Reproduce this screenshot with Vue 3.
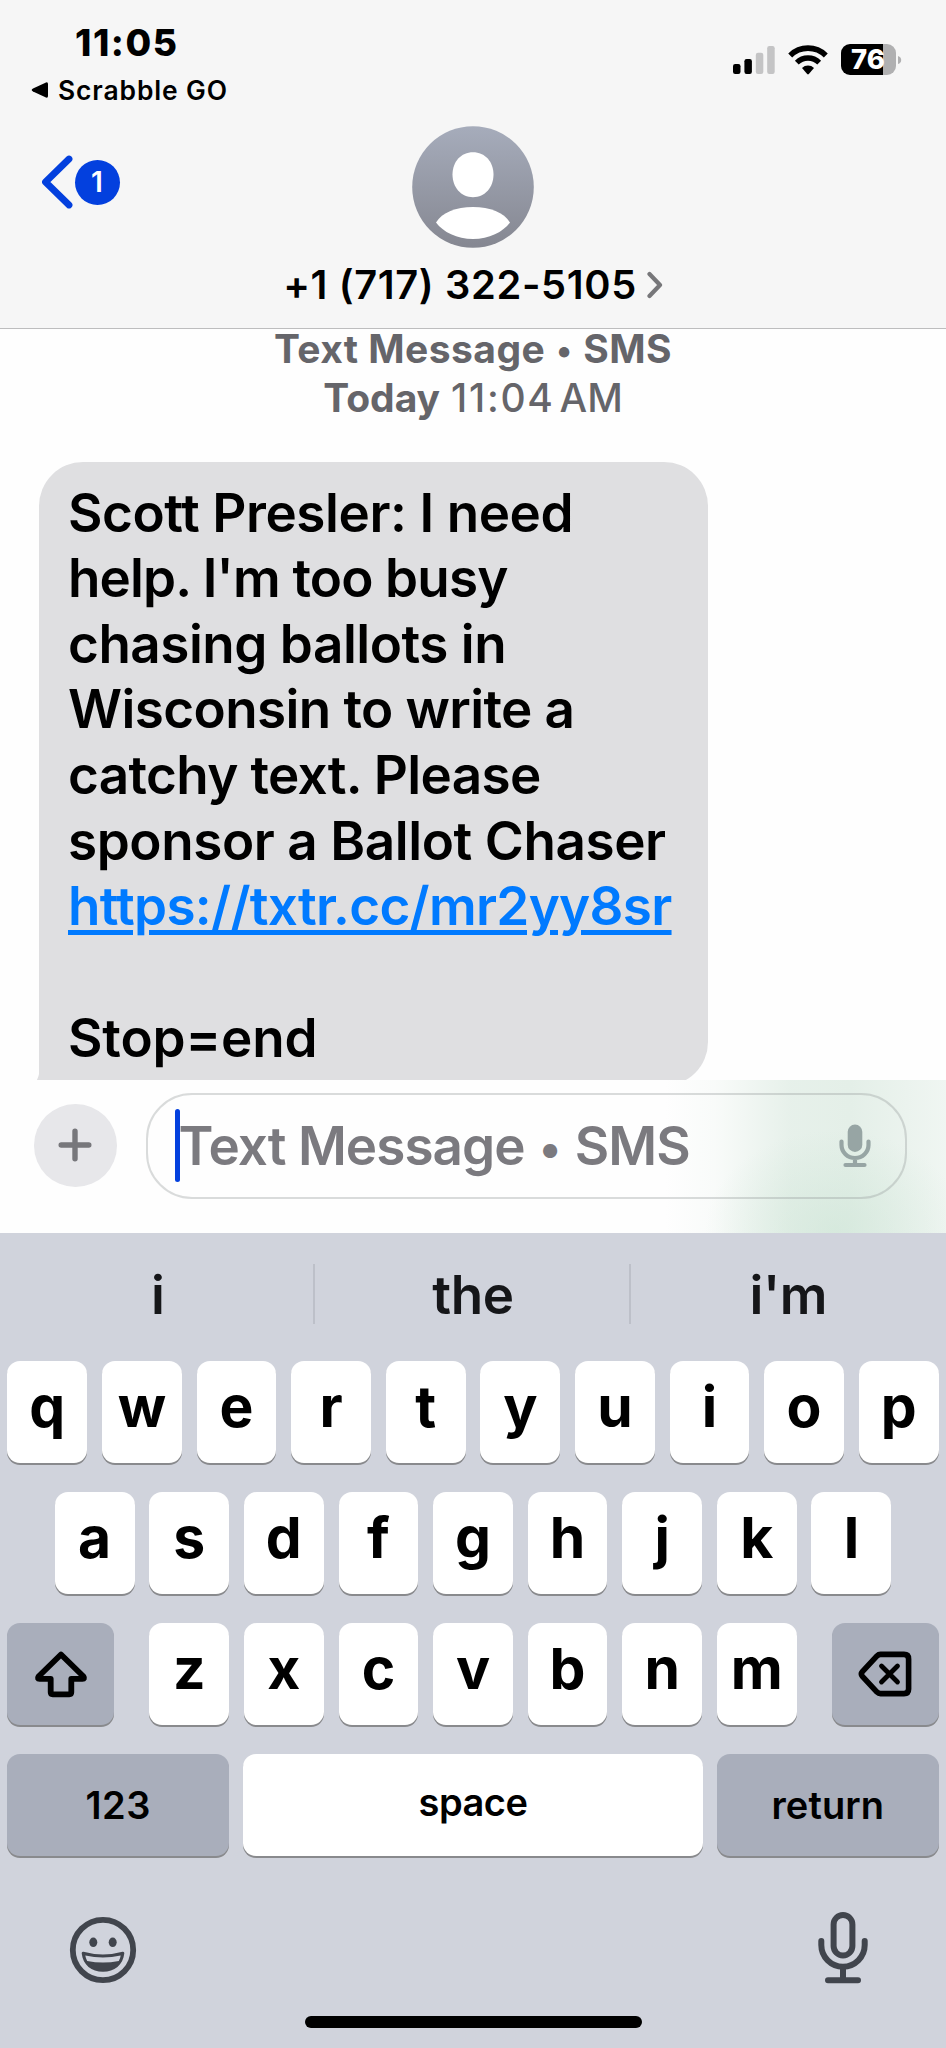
<script setup>
const messageLines = [
  { text: 'Scott Presler: I need', spacing: -0.42 },
  { text: "help. I'm too busy", spacing: -0.85 },
  { text: 'chasing ballots in', spacing: -0.48 },
  { text: 'Wisconsin to write a', spacing: -0.6 },
  { text: 'catchy text. Please', spacing: -0.66 },
  { text: 'sponsor a Ballot Chaser', spacing: -0.42 },
  { text: 'https://txtr.cc/mr2yy8sr', spacing: -0.71, link: true },
  { text: '', spacing: 0 },
  { text: 'Stop=end', spacing: -0.12 },
]
const suggestions = ['i', 'the', "i'm"]
const topRow = [...'qwertyuiop']
const homeRow = [...'asdfghjkl']
const bottomRow = [...'zxcvbnm']
</script>

<template>
  <div class="screen">
    <header class="header">
      <div class="status">
        <div class="clock-block">
          <div class="clock">11:05</div>
          <div class="back-app">
            <svg width="18" height="18" viewBox="0 0 18 18"><path d="M2 7.6 15 1.4Q17 .7 17 3v12q0 2.3-2 1.6L2 10.4Q-.6 9 2 7.6Z" /></svg>
            <span>Scrabble GO</span>
          </div>
        </div>
        <div class="indicators">
          <svg width="42" height="28" viewBox="0 0 42 28">
            <rect x="0" y="18" width="7.5" height="10" rx="2.2" />
            <rect x="11.4" y="13" width="7.5" height="15" rx="2.2" />
            <rect x="22.8" y="6.8" width="7.5" height="21.2" rx="2.2" fill="#c4c4c5" />
            <rect x="34.2" y="0" width="7.5" height="28" rx="2.2" fill="#c4c4c5" />
          </svg>
          <svg class="wifi" width="40" height="30" viewBox="0 0 40 30">
            <path d="M2.2 10.4a25.4 25.4 0 0 1 35.6 0" fill="none" stroke="#000" stroke-width="5.6" />
            <path d="M8.8 17.6a16 16 0 0 1 22.4 0" fill="none" stroke="#000" stroke-width="5.4" />
            <path d="M14 23a8.6 8.6 0 0 1 12 0L20.8 29q-.8.8-1.6 0Z" />
          </svg>
          <div class="battery"><span>76</span></div>
          <svg class="nub" width="4" height="8" viewBox="0 0 4 8"><path d="M0 0q3.2 1 3.2 4T0 8Z" fill="#b0b0b1" /></svg>
        </div>
      </div>
      <div class="contact">
        <div class="back">
          <svg width="33" height="54" viewBox="0 0 33 54"><path d="M29 4 5.500 27 29 50" fill="none" stroke="#0340de" stroke-width="6.800" stroke-linecap="round" stroke-linejoin="round" /></svg>
          <span class="unread">1</span>
        </div>
        <svg width="122" height="122" viewBox="0 0 122 122">
          <defs>
            <linearGradient id="avatarFill" x1="0" y1="0" x2="0" y2="1">
              <stop offset="0" stop-color="#a6acbb" />
              <stop offset="1" stop-color="#858791" />
            </linearGradient>
          </defs>
          <circle cx="61" cy="61" r="60.800" fill="url(#avatarFill)" />
          <path d="M61 26.200c12 0 20.500 9.500 20.500 22.300S73 71.200 61 71.200 40.500 61.300 40.500 48.500 49 26.200 61 26.200Z" fill="#fff" />
          <path d="M24 96.500C30 86.500 44 81 61 81s31 5.500 37 15.500C91 106 77 113 61 113S31 106 24 96.500Z" fill="#fff" />
        </svg>
      </div>
      <div class="number">
        <span>+1 (717) 322-5105</span>
        <svg width="16" height="28" viewBox="0 0 16 28"><path d="M2.500 3 13 14 2.500 25" fill="none" stroke="#77777a" stroke-width="4.200" stroke-linecap="round" stroke-linejoin="round" /></svg>
      </div>
    </header>

    <main class="thread">
      <div class="stamp">
        <div class="service">Text Message <span class="dot">•</span> SMS</div>
        <div class="when"><b>Today</b><span class="hour">11:04</span><span>AM</span></div>
      </div>
      <div class="bubble">
        <svg class="tail" width="8" height="12" viewBox="0 0 8 12"><path d="M8 0H3.500Q3.500 5 0 12h8Z" fill="#dfdfe1" /></svg>
        <div
          v-for="(line, i) in messageLines"
          :key="i"
          class="line"
          :class="{ link: line.link }"
          :style="{ letterSpacing: line.spacing + 'px' }"
        ><span>{{ line.text }}</span></div>
      </div>
    </main>

    <section class="composer">
      <div class="plus">
        <svg width="34" height="34" viewBox="0 0 34 34"><path d="M17 3.200v27.600M3.200 17h27.600" stroke="#77777b" stroke-width="5.400" stroke-linecap="round" /></svg>
      </div>
      <div class="field">
        <i class="caret"></i>
        <span class="placeholder">Text Message <span class="dot">•</span> SMS</span>
        <svg width="32" height="44" viewBox="0 0 32 44">
          <rect x="8.700" y="0.500" width="14.600" height="27.500" rx="7.300" fill="#97a5a4" />
          <path d="M2.500 17.500v3.500a13.500 13 0 0 0 27 0v-3.500M16 34v6M6.500 41h19" fill="none" stroke="#97a5a4" stroke-width="4.200" stroke-linecap="round" />
        </svg>
      </div>
    </section>

    <section class="keyboard">
      <div class="suggestions">
        <div v-for="word in suggestions" :key="word" class="suggestion">{{ word }}</div>
      </div>
      <div class="row">
        <div v-for="k in topRow" :key="k" class="key">{{ k }}</div>
      </div>
      <div class="row">
        <div v-for="k in homeRow" :key="k" class="key">{{ k }}</div>
      </div>
      <div class="row spread">
        <div class="key side">
          <svg width="54" height="48" viewBox="0 0 54 48"><path d="M27 4.500 49.500 26.500q1.500 2.300-1 2.300H37.300v13.500q0 2-2 2H18.700q-2 0-2-2V28.800H5.500q-2.500 0-1-2.300Z" fill="none" stroke="#000" stroke-width="5.800" stroke-linejoin="round" /></svg>
        </div>
        <div class="letters">
          <div v-for="k in bottomRow" :key="k" class="key">{{ k }}</div>
        </div>
        <div class="key side">
          <svg width="54" height="46" viewBox="0 0 54 46">
            <path d="M22.500 3.400H46q4.600 0 4.600 4.600v30q0 4.600-4.600 4.600H22.500q-2 0-3.500-1.500L4.400 25.300Q2.400 23 4.400 20.700L19 4.900q1.500-1.500 3.500-1.500Z" fill="none" stroke="#000" stroke-width="5.600" stroke-linejoin="round" />
            <path d="m23.500 15 16 16m0-16-16 16" stroke="#000" stroke-width="4.800" stroke-linecap="round" />
          </svg>
        </div>
      </div>
      <div class="row spread">
        <div class="key wide digits">123</div>
        <div class="key space">space</div>
        <div class="key wide enter">return</div>
      </div>
      <div class="tools">
        <svg width="68" height="68" viewBox="0 0 68 68">
          <circle cx="34" cy="34" r="30.200" fill="none" stroke="#41454d" stroke-width="5.800" />
          <ellipse cx="24.300" cy="26.300" rx="4" ry="4.800" fill="#41454d" />
          <ellipse cx="43.700" cy="26.300" rx="4" ry="4.800" fill="#41454d" />
          <path d="M14.500 35.800q19.500 5.500 39 0 2-.4 1.800 1.800C54 49 45.500 55.800 34 55.800S14 49 12.700 37.600q-.2-2.200 1.800-1.800Z" fill="#41454d" />
          <path d="M16.300 39.600q17.700 3.800 35.400 0-.4 3-1.900 5.400-15.800 3-31.600 0-1.500-2.400-1.900-5.400Z" fill="#d0d3dc" />
        </svg>
        <svg width="50" height="72" viewBox="0 0 50 72">
          <g fill="none" stroke="#41454d" stroke-width="6" stroke-linecap="round">
            <rect x="15.600" y="3" width="18.800" height="40.500" rx="9.400" />
            <path d="M3.300 29v4a21.700 21.700 0 0 0 43.400 0v-4M25 56v12M10 68.300h30" />
          </g>
        </svg>
      </div>
      <div class="home-bar"></div>
    </section>
  </div>
</template>

<style>
body { margin: 0; background: #fff; }
</style>

<style scoped>
.screen { width: 946px; height: 2048px; display: flex; flex-direction: column; overflow: hidden; background: #fefefe; color: #000; font-family: Inter, "Liberation Sans", sans-serif; white-space: nowrap; }
svg { display: block; flex: none; }

.header { height: 328px; flex: none; background: #f6f6f6; border-bottom: 1.500px solid #bdbdbe; box-sizing: content-box; }
.status { height: 126px; display: flex; justify-content: space-between; box-sizing: border-box; padding: 22px 44px 0 31px; }
.clock { padding-left: 44px; font-size: 37.200px; line-height: 41px; font-weight: 800; letter-spacing: 1.500px; }
.back-app { display: flex; align-items: center; gap: 9px; margin-top: 11.500px; font-size: 26.400px; line-height: 31px; font-weight: 600; letter-spacing: .900px; }
.indicators { display: flex; align-items: flex-start; padding-top: 24px; }
.wifi { margin-left: 13px; margin-top: -1px; }
.battery { margin: -2px 0 0 13px; width: 55px; height: 31px; border-radius: 9px; background: linear-gradient(90deg, #000 42px, #b0b0b1 42px); color: #fff; font-size: 27.500px; line-height: 31px; font-weight: 800; text-align: center; text-indent: -1px; }
.nub { margin: 10px 0 0 2px; }

.contact { height: 122px; display: flex; justify-content: center; position: relative; }
.back { position: absolute; left: 39.500px; top: 29px; display: flex; align-items: center; gap: 2px; }
.unread { width: 45px; height: 45px; border-radius: 50%; background: #0340de; color: #fff; font-size: 28px; line-height: 45px; font-weight: 600; text-align: center; }
.number { display: flex; align-items: center; justify-content: center; gap: 10px; height: 74px; font-size: 39.800px; line-height: 74px; font-weight: 600; letter-spacing: .650px; }

.thread { flex: 1; min-height: 0; display: flex; flex-direction: column; align-items: flex-start; }
.stamp { align-self: stretch; height: 127.500px; flex: none; color: #65656a; font-size: 39px; line-height: 39px; font-weight: 700; text-align: center; }
.service { letter-spacing: .450px; }
.dot { font-size: .85em; line-height: 0; margin: 0 .04em; vertical-align: .02em; }
.when { display: flex; justify-content: center; line-height: 59px; font-weight: 500; }
.when b { font-weight: 700; margin-right: 11px; letter-spacing: 0; }
.hour { letter-spacing: 1.700px; margin-right: 5px; }
.bubble { position: relative; width: 668.500px; height: 624px; flex: none; box-sizing: border-box; margin: 5px 0 0 39px; padding: 19px 0 0 29px; border-radius: 44px 44px 44px 0; background: #dfdfe1; font-size: 53px; font-weight: 600; }
.tail { position: absolute; left: -3.500px; top: 608px; }
.line { height: 65.630px; line-height: 65.630px; }
.link span { color: #007aff; text-decoration: underline; text-decoration-thickness: 5px; text-underline-offset: 5px; }

.composer { position: relative; height: 153px; flex: none; box-sizing: border-box; display: flex; align-items: flex-start; padding: 12.500px 39px 0 34px; background: radial-gradient(ellipse 130px 100px at 835px 150px, rgba(205, 229, 214, .6) 0%, rgba(205, 229, 214, 0) 100%), linear-gradient(90deg, rgba(228, 239, 232, 0) 665px, rgba(228, 239, 232, .2) 715px, rgba(228, 239, 232, .9) 790px, rgba(228, 239, 232, 1) 850px, rgba(228, 239, 232, .55) 946px), #fefefe; }
.plus { width: 82.500px; height: 82.500px; margin-top: 11.500px; border-radius: 50%; background: #e7e7ea; display: flex; align-items: center; justify-content: center; }
.field { width: 760.500px; height: 106px; margin-left: 29.500px; box-sizing: border-box; border: 2px solid rgba(150, 155, 155, .35); border-radius: 46px; display: flex; align-items: center; padding: 0 34px 0 27px; }
.caret { width: 5px; height: 73px; border-radius: 2.500px; background: #0340de; }
.placeholder { flex: 1; margin-left: -1.500px; color: #7b7a7f; font-size: 53px; line-height: 66px; font-weight: 600; letter-spacing: -.950px; }

.keyboard { height: 815px; flex: none; display: flex; flex-direction: column; background: #d0d3dc; }
.suggestions { height: 128px; flex: none; display: grid; grid-template-columns: repeat(3, 1fr); align-items: start; padding-top: 31px; box-sizing: border-box; }
.suggestion { height: 60px; line-height: 63px; text-align: center; font-size: 53px; font-weight: 600; letter-spacing: -.400px; color: #151619; }
.suggestion + .suggestion { box-shadow: -2px 0 0 #bdc0c9; }
.row { display: flex; justify-content: center; gap: 14.800px; height: 102px; margin-bottom: 29.130px; padding: 0 7.400px; flex: none; }
.spread { justify-content: space-between; gap: 0; }
.letters { display: flex; gap: 14.800px; }
.key { width: 79.800px; height: 102px; border-radius: 13px; background: #fff; box-shadow: 0 2px 0 #898a8d; font-size: 57px; line-height: 92px; font-weight: 700; text-align: center; }
.side, .wide { background: #a9aebb; }
.side { width: 106.500px; display: flex; align-items: center; justify-content: center; }
.wide { width: 221.500px; font-size: 38px; line-height: 103px; font-weight: 600; }
.digits { letter-spacing: .500px; }
.enter { letter-spacing: .100px; }
.space { width: 460px; font-size: 38px; line-height: 97px; font-weight: 600; letter-spacing: -.500px; }
.tools { display: flex; justify-content: space-between; align-items: flex-end; padding: 0 78.500px 0 69px; height: 98px; }
.home-bar { width: 337px; height: 12px; margin: 32px auto 0; border-radius: 6px; background: #000; }
</style>
